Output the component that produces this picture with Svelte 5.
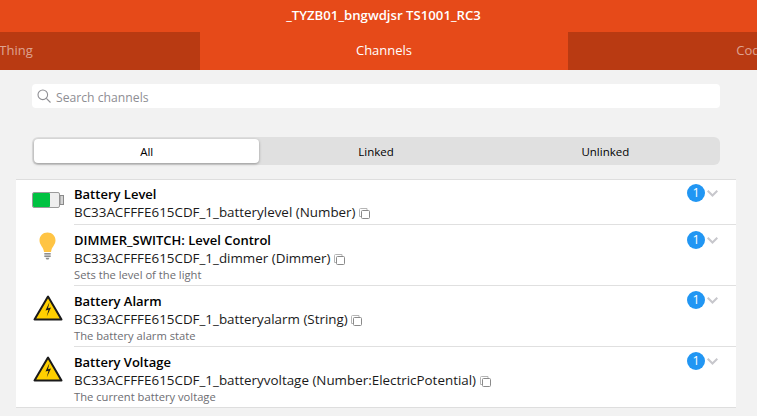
<script>
	const rows = [
		{ icon: 'battery', label: 'Battery Level', id: 'BC33ACFFFE615CDF_1_batterylevel (Number)', desc: '' },
		{ icon: 'bulb', label: 'DIMMER_SWITCH: Level Control', id: 'BC33ACFFFE615CDF_1_dimmer (Dimmer)', desc: 'Sets the level of the light' },
		{ icon: 'alarm', label: 'Battery Alarm', id: 'BC33ACFFFE615CDF_1_batteryalarm (String)', desc: 'The battery alarm state' },
		{ icon: 'alarm', label: 'Battery Voltage', id: 'BC33ACFFFE615CDF_1_batteryvoltage (Number:ElectricPotential)', desc: 'The current battery voltage' }
	];
</script>

<div class="page">
	<header class="title">_TYZB01_bngwdjsr TS1001_RC3</header>

	<nav class="tabs">
		<div class="tab">Thing</div>
		<div class="tab active">Channels</div>
		<div class="tab">Code</div>
	</nav>

	<div class="search">
		<svg width="14" height="14" viewBox="0 0 14 14" fill="none" stroke="#8e8e93" stroke-width="1.1">
			<circle cx="5.800" cy="5.800" r="4.800" />
			<path d="M9.300 9.300l4.200 4.200" />
		</svg>
		<span>Search channels</span>
	</div>

	<div class="segmented">
		<button class="seg selected">All</button>
		<button class="seg">Linked</button>
		<button class="seg">Unlinked</button>
	</div>

	<ul class="list">
		{#each rows as row}
			<li class="row" class:has-desc={row.desc}>
				<div class="media {row.icon}">
					{#if row.icon === 'battery'}
						<svg width="32" height="16" viewBox="0 0 32 16">
							<rect x="0.500" y="0.500" width="27" height="15" rx="1.500" fill="#eeeeee" stroke="#9a9a9a" />
							<rect x="1" y="1" width="17" height="14" rx="1" fill="#00c241" />
							<rect x="28" y="3.500" width="3.500" height="9" fill="#d4d4d4" stroke="#8a8a8a" />
						</svg>
					{:else if row.icon === 'bulb'}
						<svg width="17" height="28" viewBox="0 0 17 28">
							<path d="M8.500 0.500C3.900 0.500 0.500 4 0.500 8.300c0 4.400 3.200 6.200 4.200 10.200l.3 1.500h7l.3-1.500c1-4 4.200-5.800 4.200-10.200C16.500 4 13.100 0.500 8.500 0.500z" fill="#ffc444" />
							<rect x="5.300" y="21" width="6.400" height="1.600" fill="#8e8e8e" />
							<rect x="5.300" y="23.400" width="6.400" height="1.600" fill="#8e8e8e" />
							<path d="M6.500 25.800h4l-1 1.700h-2z" fill="#8e8e8e" />
						</svg>
					{:else}
						<svg width="30" height="26" viewBox="0 0 30 26">
							<path d="M15 1.500L1.500 24.500h27z" fill="#ffd000" stroke="#1a1a1a" stroke-width="2" stroke-linejoin="round" />
							<path d="M16.500 7l-4 8.500 3-.8-1.800 6.800 4.300-9-3 .8z" fill="#1a1a1a" />
						</svg>
					{/if}
				</div>
				<div class="inner">
					<div class="text">
						<div class="label">{row.label}</div>
						<div class="id">
							{row.id}
							<svg class="copy" width="11" height="11" viewBox="0 0 11 11" fill="none" stroke="#8a8a8a" stroke-width="1">
								<path d="M2 8.500H.5V1.500a1 1 0 0 1 1-1H8V2" stroke="#b5b5b5" />
								<rect x="2.500" y="2.500" width="8" height="8" rx="1" />
							</svg>
						</div>
						{#if row.desc}
							<div class="desc">{row.desc}</div>
						{/if}
					</div>
					<div class="after">
						<span class="badge">1</span>
						<svg width="11" height="7" viewBox="0 0 11 7" fill="none" stroke="#c7c7cc" stroke-width="2">
							<path d="M.7.800L5.500 5.500 10.300.800" />
						</svg>
					</div>
				</div>
			</li>
		{/each}
	</ul>
</div>

<style>
	:global(body) {
		margin: 0;
		background: #f2f2f2;
	}

	.page {
		height: 416px;
		overflow: hidden;
		font-family: "Open Sans", "Noto Sans", sans-serif;
		color: #000;
	}

	.title {
		height: 32px;
		line-height: 30px;
		padding-left: 10px;
		background: #e64a19;
		color: #fff;
		text-align: center;
		font-size: 13.2px;
		font-weight: 600;
	}

	.tabs {
		display: flex;
		height: 38px;
		margin-left: -168px;
		width: 1104px;
	}

	.tab {
		flex: 1;
		background: #b93a12;
		color: rgba(255, 255, 255, 0.54);
		text-align: center;
		font-size: 13px;
		line-height: 37px;
	}

	.tab.active {
		background: #e64a19;
		color: #fff;
	}

	.search {
		display: flex;
		align-items: center;
		gap: 5px;
		height: 24px;
		margin: 14px 37px 0 32px;
		padding-left: 5px;
		background: #fff;
		border-radius: 4px;
		color: #8e8e93;
		font-size: 12.2px;
	}

	.search span {
		padding-top: 2px;
	}

	.segmented {
		display: grid;
		grid-template-columns: repeat(3, 1fr);
		height: 28px;
		margin: 29px 37px 0 32px;
		background: #e0e0e0;
		border-radius: 6px;
	}

	.seg {
		border: none;
		background: none;
		padding: 0;
		font: 500 11.5px "Open Sans", "Noto Sans", sans-serif;
		color: #000;
	}

	.seg.selected {
		margin: 2px;
		background: #fff;
		border-radius: 4px;
		box-shadow: 0 1px 3px rgba(0, 0, 0, 0.35);
	}

	.list {
		list-style: none;
		margin: 14px 21px 0 16px;
		padding: 0;
		background: #fff;
		border-top: 1px solid #dedede;
		border-bottom: 1px solid #dedede;
	}

	.row {
		display: flex;
	}

	.media {
		flex: none;
		width: 58px;
		display: flex;
		align-items: flex-start;
		box-sizing: border-box;
	}

	.media.battery {
		padding: 12px 0 0 16px;
	}

	.media.bulb {
		padding: 7px 0 0 23px;
	}

	.media.alarm {
		padding: 9px 0 0 17px;
	}

	.inner {
		flex: 1;
		display: flex;
		justify-content: space-between;
		border-bottom: 1px solid #e0e0e0;
		padding-bottom: 3px;
	}

	.row:last-child .inner {
		border-bottom: none;
	}

	.text {
		padding-top: 5px;
	}

	.has-desc .text {
		padding-top: 6px;
	}

	.label {
		font-size: 13px;
		font-weight: 600;
		line-height: 18px;
	}

	.id {
		font-size: 13.4px;
		line-height: 18px;
		color: #1a1a1a;
		white-space: nowrap;
	}

	.copy {
		vertical-align: -2px;
	}

	.desc {
		font-size: 11.2px;
		line-height: 15px;
		color: #6d6d72;
	}

	.after {
		display: flex;
		align-items: flex-start;
		gap: 2px;
		padding: 4px 18px 0 0;
	}

	.has-desc .after {
		padding-top: 5px;
	}

	.row:nth-child(2) .after {
		padding-top: 6px;
	}

	.badge {
		width: 18px;
		height: 18px;
		border-radius: 50%;
		background: #2196f3;
		color: #fff;
		font-size: 12.5px;
		line-height: 18px;
		text-align: center;
	}

	.after svg {
		margin-top: 6px;
	}
</style>
